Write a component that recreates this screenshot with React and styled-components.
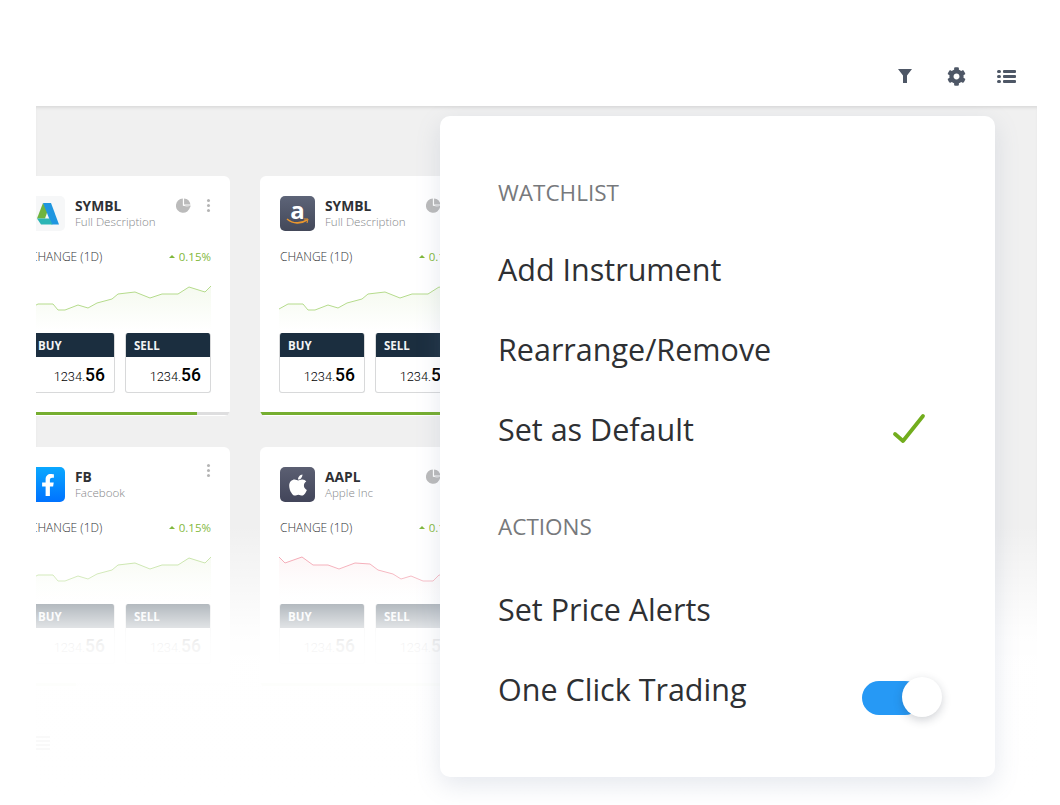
import React from "react";
import styled, { createGlobalStyle } from "styled-components";
import { FaApple, FaCog, FaFacebookF } from "react-icons/fa";

const GlobalStyle = createGlobalStyle`
  html, body {
    margin: 0;
    padding: 0;
    background: #fff;
    font-family: "Open Sans", sans-serif;
  }
`;

const Page = styled.div`
  width: 1060px;
  height: 805px;
  overflow: hidden;
  background: #fff;
`;

const TopBar = styled.header`
  height: 106px;
  padding-right: 43px;
  display: flex;
  justify-content: flex-end;
  align-items: flex-start;
  gap: 31px;
  color: #4e5766;
  box-sizing: border-box;
  padding-top: 66px;
`;

const TopIcon = styled.span`
  width: 20px;
  height: 20px;
  display: flex;
  align-items: center;
  justify-content: ${(p) => p.$justify || "center"};
`;

const Stage = styled.main`
  position: relative;
  height: 699px;
  margin: 0 23px 0 36px;
  overflow: hidden;
  background: #f0f0f0;
  box-shadow: inset 0 3px 3px -1px #dcdcdc;
`;

const CardGrid = styled.div`
  display: grid;
  grid-template-columns: 220px 220px;
  gap: 31px 30px;
  padding-top: 70px;
  margin-left: -26px;
`;

const Card = styled.article`
  position: relative;
  height: 240px;
  box-sizing: border-box;
  padding: 20px 19px 0 20px;
  background: #fff;
  border-radius: 6px;
  overflow: hidden;
`;

const CardHead = styled.div`
  display: flex;
  align-items: flex-start;
  height: 35px;
`;

const Logo = styled.div`
  width: 35px;
  height: 35px;
  flex: none;
  border-radius: 5px;
  display: flex;
  align-items: center;
  justify-content: center;
  background: ${(p) => p.$bg};
  color: #fff;
  position: relative;
`;

const AmazonLetter = styled.span`
  font: 700 24px/28px "Open Sans", sans-serif;
  margin-top: -7px;
`;

const Smile = styled.svg`
  position: absolute;
  left: 6px;
  top: 22px;
`;

const Names = styled.div`
  margin-left: 10px;
  flex: 1;
  min-width: 0;
`;

const Symbol = styled.div`
  font-size: 13.8px;
  line-height: 17px;
  font-weight: 700;
  color: #2f3135;
  margin-top: 1px;
`;

const FullName = styled.div`
  font-size: 11.6px;
  font-weight: 300;
  line-height: 15px;
  color: #85878a;
`;

const HeadIcons = styled.div`
  display: flex;
  align-items: center;
  gap: 16px;
  padding: 2px 0 0;
`;

const Kebab = styled.span`
  width: 3px;
  height: 3px;
  margin-right: 1px;
  border-radius: 50%;
  background: #b4b4b4;
  box-shadow: 0 -5px 0 #b4b4b4, 0 5px 0 #b4b4b4;
`;

const ChangeRow = styled.div`
  margin-top: 18px;
  display: flex;
  justify-content: space-between;
  align-items: center;
  font-size: 12px;
  font-weight: 300;
  line-height: 16px;
  color: #2f3135;
`;

const Percent = styled.span`
  display: flex;
  align-items: center;
  gap: 4px;
  color: #7fb73b;
  font-size: 11.5px;
  font-weight: 500;
  margin-top: -1px;
`;

const UpArrow = styled.i`
  width: 0;
  height: 0;
  border: 3px solid transparent;
  border-top: 0;
  border-bottom: 3px solid #7fb73b;
`;

const Chart = styled.svg`
  display: block;
  margin: 15px 0 0 -1px;
`;

const Quotes = styled.div`
  display: grid;
  grid-template-columns: 86px 86px;
  gap: 10px;
  margin: 3px 0 0 -1px;
`;

const Quote = styled.div`
  height: 60px;
  border-radius: 3px;
  overflow: hidden;
  border: 1px solid #d8d9da;
  border-top: 0;
  box-sizing: border-box;
`;

const QuoteLabel = styled.div`
  height: 24px;
  margin: 0 -1px;
  padding-left: 9px;
  background: #1b2e3f;
  color: #f2f3f4;
  font-size: 11.5px;
  font-weight: 700;
  line-height: 25px;
`;

const Price = styled.div`
  height: 35px;
  padding-right: 9px;
  display: flex;
  justify-content: flex-end;
  align-items: baseline;
  font-family: Roboto, sans-serif;
  font-size: 12.8px;
  font-weight: 300;
  line-height: 37px;
  color: #000;

  b {
    font-size: 17.5px;
    font-weight: 500;
  }
`;

const Progress = styled.div`
  position: absolute;
  left: 0;
  right: 0;
  bottom: 1px;
  height: 3px;
  background: #dededf;

  span {
    display: block;
    height: 100%;
    background: #76ae30;
  }
`;

const Fade = styled.div`
  position: absolute;
  inset: 0;
  pointer-events: none;
  background: linear-gradient(
    to bottom,
    rgba(255, 255, 255, 0) 60%,
    rgba(255, 255, 255, 0.65) 71%,
    rgba(255, 255, 255, 0.86) 74.5%,
    rgba(255, 255, 255, 0.95) 77%,
    rgba(255, 255, 255, 0.985) 80%,
    #fff 100%
  );
`;

const FaintMark = styled.span`
  position: absolute;
  left: 0;
  top: 630px;
  width: 14px;
  height: 14px;
  background: repeating-linear-gradient(to bottom, #f9f9f9 0 2px, transparent 2px 4px);
`;

const Panel = styled.aside`
  position: absolute;
  top: 10px;
  right: 42px;
  width: 555px;
  height: 661px;
  box-sizing: border-box;
  padding: 57px 52px 0 58px;
  background: #fff;
  border-radius: 10px;
  box-shadow: 0 8px 24px rgba(110, 125, 160, 0.18);
`;

const SectionTitle = styled.h3`
  margin: ${(p) => p.$top}px 0 ${(p) => p.$bottom}px;
  font-size: 22.5px;
  font-weight: 400;
  line-height: 40px;
  color: #77797c;
`;

const MenuRow = styled.div`
  height: 80px;
  box-sizing: border-box;
  padding-bottom: 3px;
  display: flex;
  align-items: center;
  justify-content: space-between;
  font-size: 30.5px;
  color: #2e3033;
`;

const Check = styled.svg`
  margin: 3px 17px 0 0;
`;

const Toggle = styled.span`
  position: relative;
  width: 60px;
  height: 34px;
  margin: 18px 21px 0 0;
  border-radius: 17px;
  background: #2699f5;
  display: block;

  &::after {
    content: "";
    position: absolute;
    right: -20px;
    top: -4px;
    width: 40px;
    height: 40px;
    border-radius: 50%;
    background: #fff;
    box-shadow: 0 3px 10px rgba(40, 50, 70, 0.22);
  }
`;

const upPath = [
  [0, 29], [9, 24], [24, 24], [29, 30], [36, 30], [49, 25], [59, 28], [68, 23], [83, 19],
  [89, 14], [106, 12], [121, 18], [133, 14], [149, 14], [160, 7], [176, 12], [182, 6],
];

const downPath = [
  [0, 6], [6, 12], [23, 6], [34, 14], [49, 14], [60, 18], [76, 12], [91, 13], [99, 19],
  [114, 23], [122, 28], [132, 25], [144, 30], [154, 30], [160, 24], [176, 24], [182, 29],
];

const Spark = ({ id, points, line, fill }) => {
  const d = points.map((p) => p.join(",")).join(" ");
  return (
    <Chart width="182" height="50" viewBox="0 0 182 50">
      <defs>
        <linearGradient id={id} x1="0" y1="0" x2="0" y2="1">
          <stop offset="0" stopColor={fill} />
          <stop offset="1" stopColor="#fff" />
        </linearGradient>
      </defs>
      <polygon points={`0,50 ${d} 182,50`} fill={`url(#${id})`} />
      <polyline points={d} fill="none" stroke={line} strokeWidth="1" />
    </Chart>
  );
};

const Pie = () => (
  <svg width="15" height="15" viewBox="0 0 16 16" fill="#bbb">
    <path d="M7.3 0.6A7.6 7.6 0 1 0 15 9.6L7.3 8.3Z" />
    <path d="M8.6 0.4V6.9L15.4 6.9A7.6 7.6 0 0 0 8.6 0.4Z" />
    <path d="M8.8 8.1L15.6 8.1A7.6 7.6 0 0 1 15.2 9.9Z" />
  </svg>
);

const FunnelIcon = () => (
  <svg width="16" height="14" viewBox="-1 0 16 14" fill="#4e5766">
    <path d="M0 0H14L9 6.5V14H5V6.5Z" />
  </svg>
);

const ListIcon = () => (
  <svg width="19" height="13" viewBox="0 0 19 13" fill="#4e5766">
    <rect x="0" y="0" width="4" height="3" rx="1.5" />
    <rect x="6" y="0" width="13" height="3" rx="1" />
    <rect x="0" y="5" width="4" height="3" rx="1.5" />
    <rect x="6" y="5" width="13" height="3" rx="1" />
    <rect x="0" y="10" width="4" height="3" rx="1.5" />
    <rect x="6" y="10" width="13" height="3" rx="1" />
  </svg>
);

const AutodeskLogo = () => (
  <svg width="22" height="22" viewBox="0 0 22 22">
    <path d="M0 15.5L6 0L11 7L8 15.5Z" fill="#6fb43f" />
    <path d="M6 0H14L22 21.5H14.5Z" fill="#1f96e0" />
    <path d="M0 15.5H12.5L15.5 21.5H4Z" fill="#2bb5b5" />
  </svg>
);

const cards = [
  {
    key: "adsk",
    logo: <AutodeskLogo />,
    logoBg: "#f6f7f8",
    symbol: "SYMBL",
    name: "Full Description",
    pie: true,
    bar: 85,
  },
  {
    key: "amzn",
    logo: (
      <>
        <AmazonLetter>a</AmazonLetter>
        <Smile width="23" height="8" viewBox="0 0 23 8">
          <path d="M1 1C7 6 15 6 21 2" fill="none" stroke="#e9962e" strokeWidth="1.6" />
          <path d="M18 1L22 1L21 5" fill="none" stroke="#e9962e" strokeWidth="1" />
        </Smile>
      </>
    ),
    logoBg: "linear-gradient(#5d6478, #434859)",
    symbol: "SYMBL",
    name: "Full Description",
    pie: true,
    bar: 100,
  },
  {
    key: "fb",
    logo: <FaFacebookF size={22} />,
    logoBg: "linear-gradient(#0aa8ff, #0072ff)",
    symbol: "FB",
    name: "Facebook",
    pie: false,
    bar: 30,
  },
  {
    key: "aapl",
    logo: <FaApple size={24} />,
    logoBg: "linear-gradient(#5b5f72, #42455a)",
    symbol: "AAPL",
    name: "Apple Inc",
    pie: true,
    bar: 100,
    down: true,
  },
];

const QuoteBox = ({ label }) => (
  <Quote>
    <QuoteLabel>{label}</QuoteLabel>
    <Price>
      1234.<b>56</b>
    </Price>
  </Quote>
);

const InstrumentCard = ({ card }) => (
  <Card>
    <CardHead>
      <Logo $bg={card.logoBg}>{card.logo}</Logo>
      <Names>
        <Symbol>{card.symbol}</Symbol>
        <FullName>{card.name}</FullName>
      </Names>
      <HeadIcons>
        {card.pie && <Pie />}
        <Kebab />
      </HeadIcons>
    </CardHead>
    <ChangeRow>
      <span>CHANGE (1D)</span>
      <Percent>
        <UpArrow />
        0.15%
      </Percent>
    </ChangeRow>
    {card.down ? (
      <Spark id={`fill-${card.key}`} points={downPath} line="#f08a9a" fill="#fdf2f3" />
    ) : (
      <Spark id={`fill-${card.key}`} points={upPath} line="#b5db8c" fill="#f5faef" />
    )}
    <Quotes>
      <QuoteBox label="BUY" />
      <QuoteBox label="SELL" />
    </Quotes>
    <Progress>
      <span style={{ width: `${card.bar}%` }} />
    </Progress>
  </Card>
);

export default function App() {
  return (
    <Page>
      <GlobalStyle />
      <TopBar>
        <TopIcon>
          <FunnelIcon />
        </TopIcon>
        <TopIcon>
          <FaCog size={19} />
        </TopIcon>
        <TopIcon $justify="flex-start">
          <ListIcon />
        </TopIcon>
      </TopBar>
      <Stage>
        <CardGrid>
          {cards.map((card) => (
            <InstrumentCard key={card.key} card={card} />
          ))}
        </CardGrid>
        <Fade />
        <FaintMark />
        <Panel>
          <SectionTitle $top={0} $bottom={17}>WATCHLIST</SectionTitle>
          <MenuRow>Add Instrument</MenuRow>
          <MenuRow>Rearrange/Remove</MenuRow>
          <MenuRow>
            Set as Default
            <Check width="34" height="34" viewBox="0 0 34 34">
              <path d="M3 21L11 28L31 3" fill="none" stroke="#72ad1d" strokeWidth="3.8" strokeLinecap="round" strokeLinejoin="round" />
            </Check>
          </MenuRow>
          <SectionTitle $top={37} $bottom={23}>ACTIONS</SectionTitle>
          <MenuRow>Set Price Alerts</MenuRow>
          <MenuRow>
            One Click Trading
            <Toggle />
          </MenuRow>
        </Panel>
      </Stage>
    </Page>
  );
}
